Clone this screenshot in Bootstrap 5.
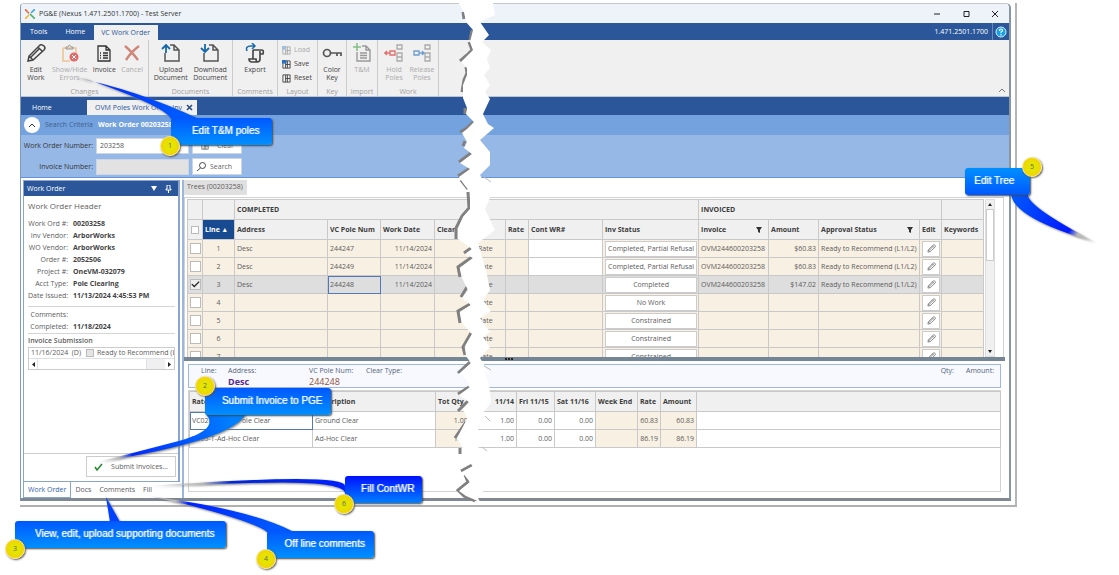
<!DOCTYPE html>
<html lang="en">
<head>
<meta charset="utf-8">
<meta name="viewport" content="width=device-width, initial-scale=1">
<title>PG&amp;E (Nexus 1.471.2501.1700) - Test Server</title>
<link href="https://cdn.jsdelivr.net/npm/bootstrap@5.3.0/dist/css/bootstrap.min.css" rel="stylesheet">
<style>
:root{--navy:#2b579a;--line:#c9c9c9;--beige:#f8f0e3;--ink:#5c5c5c}
body{font:7px/10px "Open Sans","Noto Sans",sans-serif;color:var(--ink);background:#fff}
button,input{font:inherit;color:inherit}
button{background:none;border:0;padding:0}
a{color:inherit;text-decoration:none}
svg{display:block;flex:none}
.stage{padding:3px 102px 0 20px;position:relative;min-height:100vh}
.shade{border-right:2px solid #b5b5b5;border-bottom:2px solid #b0b0b0;padding:0 4px 4px 0}
.win{border:1px solid #c4c8cc;border-right:2px solid #8795a5;border-bottom:3px solid #7f8993;border-left-color:#7e9ac4;border-radius:4px 5px 0 0;background:#fff}
.titlebar{height:19px;background:#edf3f9;color:#333;padding:0 10px 0 4px;border-radius:4px 5px 0 0}
.wincontrols{gap:20px}
.menubar{height:17px;background:var(--navy);color:#fff}
.menubar a{padding:4px 9px 3px}
.menubar a.on{background:#f0f0f0;color:var(--navy);padding:4px 8px 4px 7px;margin-top:2px;height:15px;line-height:8px}
.version{border-left:1px solid #6688bb;padding:0 2px;height:17px}
.ribbon{height:57px;background:#f0f0f0;border-bottom:1px solid #bfc5cc;line-height:8px;color:#444}
.group{border-right:1px solid #ccc;padding:3px 2px 0;display:flex;flex-direction:column;justify-content:space-between}
.group>p{margin:0;text-align:center;color:#a0a0a0;line-height:8px}
.tool{display:flex;flex-direction:column;align-items:center;width:100%}
.tool svg{width:20px;height:20px;margin-bottom:3px}
.off{color:#aaa}
.layoutbtn{height:14px;display:flex;align-items:center;gap:3px;margin-left:2px}
.doctabs{height:18px;background:var(--navy);color:#fff}
.doctabs a{padding:6px 11px 0}
.doctabs a.on{background:#f0f0f0;color:var(--navy);margin:3px 0 0;padding:3px 3px 0 8px;width:110px}
.criteria{height:20px;background:#73a2df;padding:0 3px;color:#41608c;gap:5px}
.round{width:16px;height:16px;border-radius:50%;background:#fff;display:grid;place-items:center}
.search{background:#96b8e6;padding:0 2px;border-bottom:1px solid #6494d8;color:#333}
.search label{width:70px;text-align:right;white-space:nowrap}
.search input{width:93px;height:16px;border:1px solid #cdd6e2;background:#fff;padding:0 3px;border-radius:0;color:#555}
.search input:disabled{background:#e2e2e2}
.search button{width:50px;height:17px;background:#fff;border:1px solid #ccd5e2;color:#666}
.search .line{height:21px;gap:3px}
.work{padding:2px 2px 0;height:320px}
.side{width:157px;flex:none}
.sidebox{border:1px solid #8aa6cf;border-right-width:2px}
.sidehead{height:15px;background:var(--navy);color:#fff;padding:0 6px 0 3px}
.sidebody{padding:5px 3px 0 4px}
.sidebody h2{font-size:8px;line-height:10px;margin:0 0 7px}
dl{margin:0;display:grid;grid-template-columns:40px 1fr;column-gap:5px;line-height:12px;white-space:nowrap}
dt{font-weight:400;text-align:right}dd{margin:0;font-weight:700;color:#444}
.rule{border-top:1px solid #d5d5d5;padding-top:2px}
.subs{border:1px solid #ccc;margin-top:1px;white-space:nowrap;overflow:hidden}
.submitbar{border-top:1px solid #ccc;padding:2px 2px 4px;margin-top:auto}
.submitbar button{width:90px;height:21px;border:1px solid #ccc;background:#fff}
.sidetabs{height:16px}
.sidetabs a{padding:3px 4px}
.sidetabs a.on{border:1px solid #8aa6cf;border-top:0;color:#3163ad}
.main{border-left:2px solid #9cb6dc;min-width:0;margin-left:2px}
.treetab{background:#e0e0e0;width:63px;height:15px;padding:2px 3px;margin-bottom:2px}
.gridframe{border:1px solid #d2d2d2;border-bottom:0;padding:1px 10px 0 2px;height:160px;overflow:hidden;margin-right:3px;gap:1px}
.data{table-layout:fixed;width:100%;border-collapse:collapse;white-space:nowrap}
.data th,.data td{height:18px;padding:0 2px;border:1px solid var(--line);overflow:hidden;line-height:10px}
.data th{background:#f0f0f0;height:20px;color:#3c3c3c;font-weight:700}
.beige td,.data td.tan{background:var(--beige)}
.beige td.plain{background:#fff}
.beige.sel td{background:#dedede}
.data th.sorted{background:#174a90;color:#fff}
.num{text-align:right}.mid{text-align:center}
.data td.focus{outline:1px solid #5577b5;outline-offset:-1px}
.tick{appearance:none;flex:none;width:11px;height:11px;border:1px solid #bbb;background:#fff;display:block;margin:auto}
.tick:checked{background:#eee url("data:image/svg+xml,%3Csvg xmlns='http://www.w3.org/2000/svg' viewBox='0 0 11 11'%3E%3Cpath d='M1 5l3 3 6-6' fill='none' stroke='%23222' stroke-width='1.6'/%3E%3C/svg%3E")}
.tick.small-tick{width:8px;height:8px}
.tick:disabled{background:#e4e4e4;margin:0 3px 0 5px}
.data td.btns{padding:0 1px 0 2px}
.status{display:block;width:100%;height:16px;border:1px solid #ccc;background:#fff;text-align:center}
.pen{display:grid;place-items:center}
.vbar{width:10px;background:#f0f0f0;border:1px solid #ddd;height:158px}
.vbar i{display:block;background:#fff;border:1px solid #ccc;height:52px;width:100%}
.splitter{height:4px;background:#748696;margin-right:2px}
.splitter svg{margin-left:39%}
.info{margin:3px 6px 0 4px;height:24px;border:1px solid #a0b8dc;background:#f7f9ff;line-height:11px;color:#526478;padding:0 6px 0 12px}
.info strong,.info em{font-size:9px;font-style:normal}
.detail{margin:2px 6px 0 4px;height:102px;border:1px solid #d2d2d2}
.layer{position:absolute;left:0;top:0;pointer-events:none}
.note{position:absolute;font:10px/26px "Liberation Sans",Arial,sans-serif;color:#fff;text-shadow:1px 0 rgba(255,255,255,.5);text-align:center;white-space:nowrap;height:27px;border-radius:3px;background:linear-gradient(#0058ff,#0090ff);box-shadow:1px 1px 2px #444}
.dot{position:absolute;width:20px;height:20px;border-radius:50%;background:radial-gradient(#e4e400 35%,#ffc400);border:1px solid #f5e48b;box-shadow:1px 1px 2px #555;color:#666;text-align:center;line-height:18px}
.n1{left:171px;top:118px;width:101px;padding-left:8px}.n2{left:205px;top:388px;width:126px;padding-left:8px}.n3{left:15px;top:521px;width:211px;padding-left:8px}
.n4{left:267px;top:531px;width:107px;padding-left:8px}.n5{left:965px;top:168px;width:65px;padding-right:7px;background:linear-gradient(#0090ff,#0058ff)}.n6{left:345px;top:476px;width:77px;padding-left:8px;background:linear-gradient(#0010ff,#0080ff)}
.d1{left:160px;top:136px}.d2{left:195px;top:376px}.d3{left:5px;top:539px}.d4{left:256px;top:549px}.d5{left:1022px;top:157px}.d6{left:334px;top:494px}
</style>
</head>
<body>
<svg width="0" height="0" class="position-absolute"><defs>
<symbol id="pen" viewBox="0 0 20 20"><path d="M2 18l1-5L14 2q2-1 4 1t0 4L7 17zM3 13l4 4M12 4l4 4M5 14l9-9" fill="none" stroke="currentColor" stroke-width="1.5"/></symbol>
<symbol id="doc" viewBox="0 0 20 20"><path d="M9 2h4l5 5v11H4v-8M13 2v5h5" fill="none" stroke="#555" stroke-width="1.5"/></symbol>
<symbol id="lay" viewBox="0 0 10 10"><path d="M1 1h8v8H1zM4 1v8M6 1v8M4 5h5" fill="none" stroke="currentColor"/></symbol>
<symbol id="funnel" viewBox="0 0 6 6"><path d="M0 0h6L4 3v3L2 5V3z" fill="#333"/></symbol>
</defs></svg>
<div class="stage">
<div class="shade"><div class="win">
<header class="titlebar d-flex align-items-center justify-content-between">
 <div class="d-flex align-items-center"><svg width="10" height="10" viewBox="0 0 10 10" class="me-1" fill="none" stroke-width="1.600"><path d="M0 0l4 4.500" stroke="#ef6a3d"/><path d="M10 0L6 4" stroke="#41a5df"/><path d="M4 6L0 10" stroke="#f0b72b"/><path d="M5 5l5 5" stroke="#50ad67"/></svg><span>PG&amp;E (Nexus 1.471.2501.1700) - Test Server</span></div>
 <div class="wincontrols d-flex">
  <button aria-label="Minimize"><svg width="9" height="8"><path d="M1 4h6" stroke="#222"/></svg></button>
  <button aria-label="Maximize"><svg width="9" height="8"><path d="M2 1.500h5v5H2z" fill="none" stroke="#222"/></svg></button>
  <button aria-label="Close"><svg width="8" height="8"><path d="M1 1l6 6M7 1L1 7" stroke="#222"/></svg></button>
 </div>
</header>
<nav class="menubar d-flex justify-content-between"><div class="d-flex"><a href="#">Tools</a><a href="#">Home</a><a class="on" href="#">VC Work Order</a></div>
 <div class="d-flex align-items-center"><span class="me-1">1.471.2501.1700</span><div class="version d-flex align-items-center"><button aria-label="Help"><svg width="12" height="12" viewBox="0 0 12 12"><circle cx="6" cy="6" r="5" fill="#159fe8" stroke="#d9efff"/><path d="M4.500 5q0-2 1.500-2t1.500 1.500Q7.500 5.500 6 6v1M6 8v1.500" fill="none" stroke="#fff" stroke-width="1.200"/></svg></button></div></div></nav>
<section class="ribbon d-flex">
 <div class="group" style="width:128px"><div class="d-flex">
  <button class="tool" style="width:26px"><svg><use href="#pen"/></svg>Edit<br>Work</button>
  <button class="tool off" style="width:42px"><svg viewBox="0 0 20 20"><path d="M3 5h13v6M3 5v13h7" fill="none" stroke="#edc695" stroke-width="1.600"/><path d="M6 6V4h2q1-4 3 0h2v2z" fill="none" stroke="#999"/><circle cx="14" cy="14" r="4.500" fill="#e46a68"/><path d="M12 12l4 4M16 12l-4 4" stroke="#fff"/></svg>Show/Hide<br>Errors</button>
  <button class="tool" style="width:28px"><svg viewBox="0 0 20 20"><path d="M4 3h8l4 4v11H4zM12 3v4h4M6 10h1M9 10h5M6 12.500h1M9 12.500h5M6 15h1M9 15h5" fill="none" stroke="#333" stroke-width="1.300"/></svg>Invoice</button>
  <button class="tool off" style="width:28px"><svg viewBox="0 0 20 20"><path d="M3 3q6 5 13 14M17 3Q9 9 4 17" fill="none" stroke="#cf8678" stroke-width="2.400"/></svg>Cancel</button></div><p>Changes</p></div>
 <div class="group" style="width:84px"><div class="d-flex">
  <button class="tool"><svg viewBox="0 0 20 20"><use href="#doc"/><path d="M5 10V2M1 6l4-4 4 4" fill="none" stroke="#1769ad" stroke-width="1.800"/></svg>Upload<br>Document</button>
  <button class="tool"><svg viewBox="0 0 20 20"><use href="#doc"/><path d="M5 1v8M1 5l4 4 4-4" fill="none" stroke="#1769ad" stroke-width="1.800"/></svg>Download<br>Document</button></div><p>Documents</p></div>
 <div class="group" style="width:45px"><button class="tool"><svg viewBox="0 0 20 20"><path d="M8 7h9q2 0 1 4h-3M15 8v8q0 3-3 3H7q-3 0-3-3h7q0 3 2 3M8 16V7" fill="none" stroke="#444" stroke-width="1.600"/><path d="M2 8Q0 3 6 3h4M7 0l3 3-3 3" fill="none" stroke="#1769ad" stroke-width="1.500"/></svg>Export</button><p>Comments</p></div>
 <div class="group" style="width:40px"><div><button class="layoutbtn off"><svg width="9" height="9" viewBox="0 0 10 10"><use href="#lay"/><path d="M0 0h4v4H0z" fill="#9fbfdf"/></svg>Load</button><button class="layoutbtn"><svg width="9" height="9" viewBox="0 0 10 10"><use href="#lay"/><path d="M0 0h5v4H0z" fill="#2871ba"/></svg>Save</button><button class="layoutbtn"><svg width="9" height="9"><use href="#lay"/></svg>Reset</button></div><p>Layout</p></div>
 <div class="group" style="width:29px"><button class="tool"><svg viewBox="0 0 20 20"><circle cx="5" cy="10" r="3.500" fill="none" stroke="#555" stroke-width="1.700"/><path d="M8.500 10H19v3M15 10v3" fill="none" stroke="#555" stroke-width="1.700"/></svg>Color<br>Key</button><p>Key</p></div>
 <div class="group" style="width:31px"><button class="tool off"><svg viewBox="0 0 20 20"><path d="M5 9v9h13V7l-4-4h-4M14 3v4h4M8 10h7M8 12.500h7M8 15h7" fill="none" stroke="#999" stroke-width="1.400"/><path d="M5 0v8M1 4h8" stroke="#83bf85" stroke-width="1.500"/></svg>T&amp;M</button><p>Import</p></div>
 <div class="group" style="width:61px"><div class="d-flex">
  <button class="tool off"><svg viewBox="0 0 20 20"><path d="M13 2h5v4h-5zM13 10h5v8h-5zM13 14h5" fill="none" stroke="#aaa" stroke-width="1.300"/><path d="M6 8h5v4H6zM6 10H1l2-2M1 10l2 2" fill="none" stroke="#e36b6b" stroke-width="1.300"/></svg>Hold<br>Poles</button>
  <button class="tool off"><svg viewBox="0 0 20 20"><path d="M13 2h5v4h-5zM13 10h5v8h-5zM13 14h5" fill="none" stroke="#aaa" stroke-width="1.300"/><path d="M2 8h5v4H2zM7 10h5l-2-2M12 10l-2 2" fill="none" stroke="#6b9dce" stroke-width="1.300"/></svg>Release<br>Poles</button></div><p>Work</p></div>
 <button class="ms-auto align-self-end mb-1 me-1" aria-label="Collapse ribbon"><svg width="6" height="4"><path d="M0 4l3-3 3 3" fill="none" stroke="#777"/></svg></button>
</section>
<nav class="doctabs d-flex"><a href="#" style="width:66px">Home</a><a class="on d-flex justify-content-between" href="#"><span>OVM Poles Work Order Inv</span><svg width="8" height="8" viewBox="0 0 8 8"><path d="M1 2l5 5M6 2L1 7" stroke="#234b89" stroke-width="1.500"/></svg></a></nav>
<div class="criteria d-flex align-items-center"><button class="round" aria-label="Collapse search"><svg width="6" height="4"><path d="M0 4l3-3 3 3" fill="none" stroke="#333"/></svg></button><span>Search Criteria</span><b class="text-white">Work Order 00203258</b></div>
<form class="search">
 <div class="line d-flex align-items-center"><label for="wo">Work Order Number:</label><input id="wo" value="203258"><button type="button" class="d-flex align-items-center gap-2 ps-2"><svg width="8" height="8"><use href="#lay"/></svg>Clear</button></div>
 <div class="line d-flex align-items-center"><label for="inv">Invoice Number:</label><input id="inv" disabled><button type="button" class="d-flex align-items-center gap-1 ps-1"><svg width="9" height="9"><circle cx="5.500" cy="3.500" r="3" fill="none" stroke="#444"/><path d="M3.500 6L0 9" stroke="#444"/></svg>Search</button></div>
</form>
<main class="work d-flex">
<aside class="side d-flex flex-column">
 <div class="sidebox flex-grow-1 d-flex flex-column">
 <div class="sidehead d-flex align-items-center"><span class="me-auto">Work Order</span><svg width="6" height="5" class="me-2"><path d="M0 0h6L3 5z" fill="#fff"/></svg><svg width="7" height="8"><path d="M2 0h3v4h1v1H1V4h1zM3.500 5v3" fill="none" stroke="#fff"/></svg></div>
 <div class="sidebody"><h2>Work Order Header</h2>
 <dl><dt>Work Ord #:</dt><dd>00203258</dd><dt>Inv Vendor:</dt><dd>ArborWorks</dd><dt>WO Vendor:</dt><dd>ArborWorks</dd><dt>Order #:</dt><dd>2052506</dd><dt>Project #:</dt><dd>OneVM-032079</dd><dt>Acct Type:</dt><dd>Pole Clearing</dd><dt>Date Issued:</dt><dd>11/13/2024 4:45:53 PM</dd></dl>
 <div class="rule mt-1"></div><dl><dt>Comments:</dt><dd></dd><dt>Completed:</dt><dd>11/18/2024</dd></dl>
 <div class="rule"><b class="fw-semibold">Invoice Submission</b></div>
 <div class="subs"><div class="d-flex align-items-center" style="padding-left:2px">11/16/2024 &nbsp;(D)<input type="checkbox" disabled aria-label="Ready to Recommend" class="tick small-tick"><span>Ready to Recommend (L1/L2)</span></div>
 <div class="d-flex align-items-center border-top"><svg width="8" height="9"><path d="M6 2v5L3 4.500z" fill="#222"/></svg><span class="border-start border-end" style="width:76%;height:10px"></span><span class="flex-grow-1" style="height:10px;background:#f0f0f0"></span><svg width="9" height="9"><path d="M3 2v5l3-2.500z" fill="#222"/></svg></div></div>
 </div>
 <div class="submitbar d-flex justify-content-end"><button class="d-flex align-items-center justify-content-center gap-2"><svg width="9" height="8"><path d="M1 4l2 3 5-6" fill="none" stroke="#218a2d" stroke-width="1.500"/></svg>Submit Invoices...</button></div>
 </div>
 <nav class="sidetabs d-flex"><a class="on" href="#">Work Order</a><a href="#">Docs</a><a href="#">Comments</a><a href="#">Fill</a></nav>
</aside>
<section class="main flex-grow-1">
 <div class="treetab">Trees (00203258)</div>
 <div class="gridframe d-flex">
 <div class="flex-grow-1"><table class="data">
 <colgroup><col style="width:15px"><col style="width:32px"><col style="width:93px"><col style="width:53px"><col style="width:54px"><col style="width:41px"><col style="width:30px"><col style="width:23px"><col style="width:74px"><col style="width:96px"><col style="width:70px"><col style="width:50px"><col style="width:101px"><col style="width:22px"><col style="width:42px"></colgroup>
 <thead><tr><th></th><th></th><th colspan="8">COMPLETED</th><th colspan="4">INVOICED</th><th></th></tr>
 <tr><th class="p-0"><input class="tick small-tick" type="checkbox" aria-label="Select all"></th><th class="sorted">Line &nbsp;▴</th><th>Address</th><th>VC Pole Num</th><th>Work Date</th><th>Clear</th><th></th><th>Rate</th><th>Cont WR#</th><th>Inv Status</th><th><div class="d-flex justify-content-between align-items-center pe-1">Invoice<svg width="6" height="6"><use href="#funnel"/></svg></div></th><th>Amount</th><th><div class="d-flex justify-content-between align-items-center pe-1">Approval Status<svg width="6" height="6"><use href="#funnel"/></svg></div></th><th>Edit</th><th>Keywords</th></tr></thead>
 <tbody id="trees"></tbody></table></div>
 <div class="vbar d-flex flex-column justify-content-between"><div><svg width="8" height="9"><path d="M2 6h4L4 3z" fill="#222"/></svg><i></i></div><svg width="8" height="9"><path d="M2 3h4L4 6z" fill="#222"/></svg></div>
 </div>
 <div class="splitter"><svg width="10" height="4"><path d="M1 2h8" stroke="#222" stroke-width="2" stroke-dasharray="2 1"/></svg></div>
 <div class="info d-flex"><div style="width:27px">Line:</div><div style="width:81px">Address:<br><strong style="color:#5a2a91">Desc</strong></div><div style="width:57px">VC Pole Num:<br><em style="color:#92513b">244248</em></div><div>Clear Type:</div><div class="ms-auto me-2 pe-1">Qty:</div><div>Amount:</div></div>
 <div class="detail"><table class="data">
 <colgroup><col style="width:123px"><col style="width:123px"><col style="width:41px"><col style="width:40px"><col style="width:38px"><col style="width:41px"><col style="width:42px"><col style="width:23px"><col style="width:36px"><col style="width:304px"></colgroup>
 <thead><tr><th>Rate</th><th>Description</th><th>Tot Qty</th><th class="num">11/14</th><th>Fri 11/15</th><th>Sat 11/16</th><th>Week End</th><th>Rate</th><th>Amount</th><th></th></tr></thead>
 <tbody><tr><td class="focus">VC02-Ground Pole Clear</td><td>Ground Clear</td><td class="tan">&emsp;&emsp;&nbsp;1.00</td><td class="num">1.00</td><td class="num">0.00</td><td class="num">0.00</td><td class="tan"></td><td class="tan num">60.83</td><td class="tan num">60.83</td><td></td></tr>
 <tr><td>VC03-T-Ad-Hoc Clear</td><td>Ad-Hoc Clear</td><td class="tan">&emsp;&emsp;&nbsp;1.00</td><td class="num">1.00</td><td class="num">0.00</td><td class="num">0.00</td><td class="tan"></td><td class="tan num">86.19</td><td class="tan num">86.19</td><td></td></tr></tbody></table></div>
</section>
</main>
</div></div>
<svg class="layer" width="1119" height="575" viewBox="0 0 1119 575">
 <defs>
 <linearGradient id="t1" gradientUnits="userSpaceOnUse" x1="72" y1="76" x2="172" y2="120"><stop stop-color="#ccc" stop-opacity=".2"/><stop offset=".14" stop-color="#bbb"/><stop offset=".26" stop-color="#0028ff"/><stop offset="1" stop-color="#0058ff"/></linearGradient>
 <linearGradient id="t2" gradientUnits="userSpaceOnUse" x1="98" y1="462" x2="230" y2="415"><stop stop-color="#ccc" stop-opacity=".2"/><stop offset=".15" stop-color="#bbb"/><stop offset=".25" stop-color="#0028ff"/><stop offset="1" stop-color="#0080ff"/></linearGradient>
 <linearGradient id="t4" gradientUnits="userSpaceOnUse" x1="148" y1="496" x2="270" y2="532"><stop stop-color="#ccc" stop-opacity=".2"/><stop offset=".22" stop-color="#bbb"/><stop offset=".32" stop-color="#0020ff"/><stop offset="1" stop-color="#0058ff"/></linearGradient>
 <linearGradient id="t5" gradientUnits="userSpaceOnUse" x1="1095" y1="242" x2="1015" y2="194"><stop stop-color="#ccc" stop-opacity=".2"/><stop offset=".2" stop-color="#bbb"/><stop offset=".3" stop-color="#0018ff"/><stop offset="1" stop-color="#0058ff"/></linearGradient>
 <linearGradient id="t6" gradientUnits="userSpaceOnUse" x1="150" y1="486" x2="345" y2="484"><stop stop-color="#ccc" stop-opacity=".2"/><stop offset=".27" stop-color="#bbb"/><stop offset=".42" stop-color="#0028d8"/><stop offset="1" stop-color="#0020ff"/></linearGradient>
 </defs>
 <path fill="none" stroke="#808080" stroke-width="3" d="M463 12l1 7M472 30l-2 10M469 42l3 8-5 5-7 6M466 67l1 6-3 7-2 12M465 108v6M473 122l-6 6-7 4M465 141l-2 5M471 153l-12 9M470 168l-12 8M461 180l7 9M468 192l1 16-7 8-6 12v11M471 248l-7 5M472 257l-14 10 2 10M467 287l-6 10M470 304l-12 7 2 12M471 333l-8 14 2 8M470 362l-12 11M469 387l-11 7M468 401l-10 10M466 422l-11 16M460 448v6M472 465l-11 6M465 475l3 7-10 8 6 6 11 5"/>
 <path fill="#fff" d="M458 2L464 12 466 22 473 30 470 42 473 50 467 56 461 62 467 68 467 75 463 85 463 98 467 108 466 114 474 122 467 129 462 133 467 142 464 148 472 154 460 163 470 169 459 177 463 183 470 192 470 209 463 217 458 229 458 239 472 249 465 254 473 258 460 268 462 278 468 290 462 298 471 305 460 312 462 323 472 334 465 346 466 356 471 363 459 374 467 380 470 387 459 395 469 402 463 409 467 419 457 438 463 449 464 457 473 466 462 472 470 482 459 491 466 496 480 502 478 498 484 494 479 480 478 415 485 411 491 402 489 385 484 370 490 375 480 358 490 347 483 337 490 332 480 318 491 311 483 300 490 290 486 270 482 257 478 243 495 230 485 209 490 198 484 182 480 175 490 165 490 152 480 140 494 128 488 124 483 114 490 99 485 92 490 85 484 75 490 68 487 59 491 50 482 42 489 35 480 22 495 15 493 2Z"/>
 <path fill="none" stroke="#bbb" d="M484 177l7 5M484 366l7 4M485 416l5 5M482 447l5 4"/>
 <g style="filter:drop-shadow(1px 1px 1px #777)">
 <path fill="url(#t1)" d="M72 77Q135 89 199 119H171Q165 106 86 79Z"/>
 <path fill="url(#t2)" d="M98 462Q235 440 246 413H205Q222 430 175 442Z"/>
 <path fill="#0040ff" d="M106 497l14 25h-10z"/>
 <path fill="url(#t4)" d="M148 496Q250 509 294 532H267Q255 522 185 504Z"/>
 <path fill="url(#t5)" d="M1011 194Q1013 218 1095 242 1025 205 1028 194Z"/>
 <path fill="url(#t6)" d="M150 486Q345 472 345 486V493Q343 480 250 483Z"/></g>
</svg>
<div class="note n1">Edit T&amp;M poles</div><div class="note n2">Submit Invoice to PGE</div><div class="note n3">View, edit, upload supporting documents</div><div class="note n4">Off line comments</div><div class="note n5">Edit Tree</div><div class="note n6">Fill ContWR</div>
<span class="dot d1">1</span><span class="dot d2">2</span><span class="dot d3">3</span><span class="dot d4">4</span><span class="dot d5">5</span><span class="dot d6">6</span>
</div>
<script>
const rows=[['Desc','244247','11/14/2024','Completed, Partial Refusal','OVM244600203258','$60.83','Ready to Recommend (L1/L2)'],
['Desc','244249','11/14/2024','Completed, Partial Refusal','OVM244600203258','$60.83','Ready to Recommend (L1/L2)'],
['Desc','244248','11/14/2024','Completed','OVM244600203258','$147.02','Ready to Recommend (L1/L2)'],
['','','','No Work','','',''],['','','','Constrained','','',''],['','','','Constrained','','',''],['','','','Constrained','','','']];
document.getElementById('trees').innerHTML=rows.map((r,i)=>`<tr class="beige${i==2?' sel':''}"><td class="p-0"><input class="tick" type="checkbox" aria-label="Line ${i+1}"${i==2?' checked':''}></td><td class="mid">${i+1}</td><td>${r[0]}</td><td class="${i==2?'focus':''}">${r[1]}</td><td class="num">${r[2]}</td><td></td><td>Rate</td><td></td><td class="${i<2?'plain':''}"></td><td class="btns"><button class="status">${r[3]}</button></td><td>${r[4]}</td><td class="num">${r[5]}</td><td>${r[6]}</td><td class="btns"><button class="status pen" aria-label="Edit line ${i+1}"><svg width="9" height="9"><use href="#pen"/></svg></button></td><td></td></tr>`).join('');
</script>
<script src="https://cdn.jsdelivr.net/npm/bootstrap@5.3.0/dist/js/bootstrap.bundle.min.js"></script>
</body>
</html>
